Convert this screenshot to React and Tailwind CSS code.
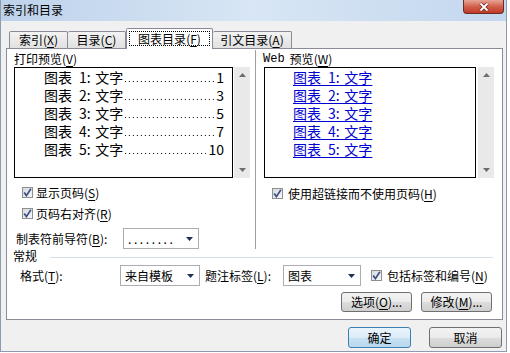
import React from "react";

function Acc({ k }) {
  return (
    <span>
      (<span className="underline underline-offset-[2px]">{k}</span>)
    </span>
  );
}

function Check() {
  return (
    <span className="w-[11px] h-[11px] shrink-0 border border-[#8e8f8f] bg-gradient-to-br from-[#d6dae2] to-[#f7f8fa] flex items-center justify-center">
      <svg width="9" height="9" viewBox="0 0 9 9">
        <path d="M1.2 4.4 L3.4 7.6 L7.9 0.8" fill="none" stroke="#3f5180" strokeWidth="1.7" />
      </svg>
    </span>
  );
}

function Arrow() {
  return (
    <svg width="7" height="4" viewBox="0 0 7 4" className="shrink-0">
      <path d="M0 0H7L3.5 4Z" fill="#1f2f55" />
    </svg>
  );
}

function Combo({ className, children }) {
  return (
    <div className={"h-[21px] shrink-0 border border-[#abadb3] bg-white flex items-center pl-[4px] pr-[5px] " + className}>
      <div className="flex-1 whitespace-nowrap">{children}</div>
      <Arrow />
    </div>
  );
}

function Btn({ className, primary, children }) {
  return (
    <div
      className={
        (primary
          ? "border-[#3c7fb1] bg-[linear-gradient(#e9f4fb,#dcecf7_50%,#c8e2f3_50%,#b9d9ee)] "
          : "border-[#707070] bg-[linear-gradient(#f2f2f2,#ebebeb_50%,#dddddd_50%,#cfcfcf)] ") +
        "h-full border rounded-[3px] flex items-center justify-center whitespace-nowrap " +
        className
      }
    >
      {children}
    </div>
  );
}

function Scroll({ className }) {
  return (
    <div className={"w-[16px] h-[111px] bg-[#e9e9e9] flex flex-col items-center justify-between py-[6px] " + className}>
      <svg width="7" height="4" viewBox="0 0 7 4">
        <path d="M0 4H7L3.5 0Z" fill="#6d6d6d" />
      </svg>
      <svg width="7" height="4" viewBox="0 0 7 4">
        <path d="M0 0H7L3.5 4Z" fill="#6d6d6d" />
      </svg>
    </div>
  );
}

const entries = [
  ["1", "1"],
  ["2", "3"],
  ["3", "5"],
  ["4", "7"],
  ["5", "10"],
];

export default function App() {
  return (
    <div className="w-[510px] h-[353px] bg-white text-[12px] leading-none text-black font-['Noto_Sans_CJK_SC','Noto_Sans',sans-serif]">
      <div className="w-[507px] h-[352px] flex flex-col bg-[#f0f0f0] border-l border-r border-b border-[#8c9bb0]">
        {/* 标题栏 */}
        <div className="h-[21px] shrink-0 flex justify-between bg-gradient-to-r from-[#bdd2eb] via-[#d8e6f5] to-[#c3d7ee]">
          <span className="pl-[2px] pt-[4px] text-[12px]">索引和目录</span>
          <div className="w-[41px] h-[14px] mr-[2px] rounded-b-[4px] border border-t-0 border-[#6c2b24] bg-gradient-to-b from-[#e6a596] via-[#d1604c] to-[#c03a25] flex items-center justify-center">
            <svg width="12" height="10" viewBox="0 0 12 10">
              <path d="M2.5 1.5L9.5 8.5M9.5 1.5L2.5 8.5" stroke="#6a2419" strokeWidth="3.4" />
              <path d="M2.5 1.5L9.5 8.5M9.5 1.5L2.5 8.5" stroke="#ffffff" strokeWidth="1.9" />
            </svg>
          </div>
        </div>

        {/* 选项卡 */}
        <div className="h-[27px] shrink-0 flex items-end pl-[8px]">
          <div className="w-[59px] h-[17px] border border-b-0 border-[#898c95] rounded-t-[2px] bg-gradient-to-b from-[#f3f3f3] to-[#e1e1e1] flex items-center justify-center">
            索引<Acc k="X" />
          </div>
          <div className="w-[58px] h-[17px] border border-b-0 border-l-0 border-[#898c95] rounded-t-[2px] bg-gradient-to-b from-[#f3f3f3] to-[#e1e1e1] flex items-center justify-center">
            目录<Acc k="C" />
          </div>
          <div className="relative z-10 -mb-px w-[87px] h-[21px] border border-b-0 border-[#898c95] rounded-t-[2px] bg-white px-[2px] pt-[2px]">
            <div className="h-[15px] border border-dotted border-black flex items-center justify-center">
              图表目录<Acc k="F" />
            </div>
          </div>
          <div className="w-[79px] h-[17px] border border-b-0 border-l-0 border-[#898c95] rounded-t-[2px] bg-gradient-to-b from-[#f3f3f3] to-[#e1e1e1] flex items-center justify-center">
            引文目录<Acc k="A" />
          </div>
        </div>

        {/* 面板 */}
        <div className="ml-[5px] w-[497px] h-[272px] shrink-0 border border-[#898c95] bg-white flex flex-col">
          <div className="h-[200px] flex">
            {/* 打印预览 */}
            <div className="w-[248px] flex flex-col">
              <div className="mt-[3px] h-[14px] pl-[7px] flex items-center">
                打印预览<Acc k="V" />
              </div>
              <div className="mt-[1px] pl-[7px] flex">
                <div className="w-[219px] h-[111px] border border-black bg-white pl-[29px] pr-[8px] text-[14px]">
                  {entries.map(([n, p]) => (
                    <div key={n} className="h-[18px] flex items-center whitespace-nowrap">
                      <span>{"图表\u2002" + n + ":\u2004文字"}</span>
                      <span className="flex-1 self-end mb-[4px] mx-[2px] h-px bg-[linear-gradient(to_right,transparent_3px,#000_3px)] bg-[length:4px_1px] bg-repeat-x bg-right" />
                      <span>{p}</span>
                    </div>
                  ))}
                </div>
                <Scroll className="ml-[1px]" />
              </div>
              <div className="mt-[9px] h-[11px] pl-[15px] flex items-center gap-[3px]">
                <Check />
                <span>
                  显示页码<Acc k="S" />
                </span>
              </div>
              <div className="mt-[10px] h-[11px] pl-[15px] flex items-center gap-[3px]">
                <Check />
                <span>
                  页码右对齐<Acc k="R" />
                </span>
              </div>
              <div className="mt-[9px] pl-[9px] flex items-center">
                <span className="w-[107px]">
                  制表符前导符<Acc k="B" />:
                </span>
                <Combo className="w-[76px]">
                  <span className="tracking-[2.6px]">........</span>
                </Combo>
              </div>
            </div>

            <div className="mt-[1px] w-px h-[199px] bg-[#a0a0a0]" />

            {/* Web 预览 */}
            <div className="flex-1 flex flex-col">
              <div className="mt-[3px] h-[14px] pl-[7px] flex items-center">
                <span className="font-['Liberation_Mono',monospace] mr-[5px]">Web</span>
                预览<Acc k="W" />
              </div>
              <div className="mt-[1px] pl-[8px] flex">
                <div className="w-[212px] h-[111px] border border-black bg-white pl-[28px] text-[14px] text-[#0000d0]">
                  {entries.map(([n]) => (
                    <div key={n} className="h-[18px] flex items-center whitespace-nowrap">
                      <span className="underline underline-offset-[2px]">{"图表\u2002" + n + ":\u2004文字"}</span>
                    </div>
                  ))}
                </div>
                <Scroll className="ml-[2px]" />
              </div>
              <div className="mt-[10px] h-[11px] pl-[16px] flex items-center gap-[5px]">
                <Check />
                <span>
                  使用超链接而不使用页码<Acc k="H" />
                </span>
              </div>
            </div>
          </div>

          {/* 常规 */}
          <div className="h-[14px] pl-[6px] flex items-start">
            <span className="h-[14px] leading-[14px]">常规</span>
            <div className="ml-[13px] mr-[9px] mt-[8px] flex-1 h-px bg-[#d5dfe5]" />
          </div>
          <div className="mt-[2px] h-[21px] pl-[13px] flex items-center">
            <span className="w-[100px]">
              格式<Acc k="T" />:
            </span>
            <Combo className="w-[80px]">来自模板</Combo>
            <span className="ml-[5px] w-[78px]">
              题注标签<Acc k="L" />:
            </span>
            <Combo className="w-[78px]">图表</Combo>
            <span className="ml-[10px]">
              <Check />
            </span>
            <span className="ml-[5px]">
              包括标签和编号<Acc k="N" />
            </span>
          </div>
          <div className="mt-[6px] h-[20px] pr-[10px] flex justify-end gap-[9px]">
            <Btn className="w-[71px]">
              选项<Acc k="O" />...
            </Btn>
            <Btn className="w-[71px]">
              修改<Acc k="M" />...
            </Btn>
          </div>
        </div>

        {/* 底部按钮 */}
        <div className="mt-[7px] h-[21px] pr-[4px] flex justify-end gap-[18px]">
          <Btn primary className="w-[63px]">
            确定
          </Btn>
          <Btn className="w-[73px]">取消</Btn>
        </div>
      </div>
    </div>
  );
}
